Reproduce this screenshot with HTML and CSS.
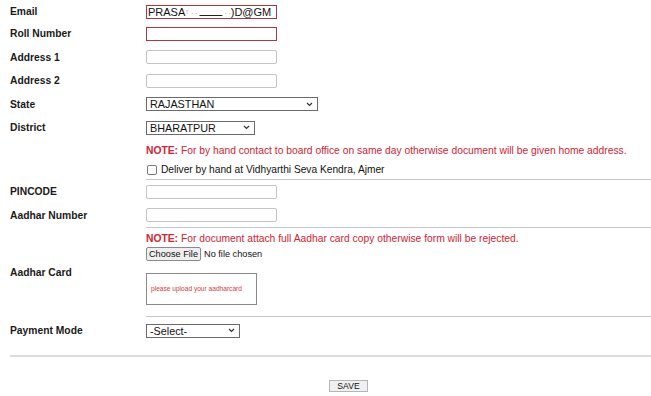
FILE: index.html
```html
<!DOCTYPE html>
<html>
<head>
<meta charset="utf-8">
<link rel="stylesheet" href="styles.css">
</head>
<body>
<div class="form">
  <div class="row r-first">
    <div class="label">Email</div>
    <div class="field"><div class="input red"><span>PRASA</span><span class="blur">&#x2191;&nbsp;.&nbsp;.&nbsp;<u>&nbsp;&nbsp;&nbsp;&nbsp;&nbsp;&nbsp;&nbsp;&nbsp;&nbsp;&nbsp;&nbsp;</u>&nbsp;.&nbsp;.</span><span>)D@GM</span></div></div>
  </div>
  <div class="row">
    <div class="label">Roll Number</div>
    <div class="field"><div class="input red"></div></div>
  </div>
  <div class="row">
    <div class="label">Address 1</div>
    <div class="field"><div class="input"></div></div>
  </div>
  <div class="row">
    <div class="label">Address 2</div>
    <div class="field"><div class="input"></div></div>
  </div>
  <div class="row">
    <div class="label">State</div>
    <div class="field"><div class="select w-state"><span>RAJASTHAN</span><svg class="chev" width="7" height="5" viewBox="0 0 7 5"><path d="M1 1 L3.5 3.5 L6 1" fill="none" stroke="#333" stroke-width="1.2"/></svg></div></div>
  </div>
  <div class="row">
    <div class="label">District</div>
    <div class="field"><div class="select w-district"><span>BHARATPUR</span><svg class="chev" width="7" height="5" viewBox="0 0 7 5"><path d="M1 1 L3.5 3.5 L6 1" fill="none" stroke="#333" stroke-width="1.2"/></svg></div></div>
  </div>
  <div class="row block b-deliver">
    <div class="label"></div>
    <div class="field lined">
      <div class="note"><b>NOTE:</b> For by hand contact to board office on same day otherwise document will be given home address.</div>
      <div class="check"><span class="box"></span><span>Deliver by hand at Vidhyarthi Seva Kendra, Ajmer</span></div>
    </div>
  </div>
  <div class="row r24">
    <div class="label">PINCODE</div>
    <div class="field"><div class="input"></div></div>
  </div>
  <div class="row r24 lined-row">
    <div class="label">Aadhar Number</div>
    <div class="field lined"><div class="input"></div></div>
  </div>
  <div class="row block b-aadhar">
    <div class="label">Aadhar Card</div>
    <div class="field lined">
      <div class="note"><b>NOTE:</b> For document attach full Aadhar card copy otherwise form will be rejected.</div>
      <div class="file"><span class="filebtn">Choose File</span><span class="nofile">No file chosen</span></div>
      <div class="preview">please upload your aadharcard</div>
    </div>
  </div>
  <div class="row r-pay">
    <div class="label">Payment Mode</div>
    <div class="field"><div class="select w-pay"><span>-Select-</span><svg class="chev" width="7" height="5" viewBox="0 0 7 5"><path d="M1 1 L3.5 3.5 L6 1" fill="none" stroke="#333" stroke-width="1.2"/></svg></div></div>
  </div>
  <div class="divider"></div>
  <div class="actions"><span class="save">SAVE</span></div>
</div>
</body>
</html>
```
FILE: styles.css
```css
html, body {
  margin: 0;
  padding: 0;
  background: #fff;
}
body {
  font-family: "Liberation Sans", Arial, sans-serif;
  color: #000;
  width: 651px;
  height: 396px;
  overflow: hidden;
}
.form {
  padding-left: 10px;
  padding-top: 1px;
}
.row {
  display: flex;
  align-items: center;
  height: 23.5px;
}
.row.r-first {
  height: 21px;
}
.row.r24 {
  height: 24px;
}
.row.lined-row {
  height: 24px;
  align-items: stretch;
}
.row.lined-row .label {
  display: flex;
  align-items: center;
}
.row.lined-row .field {
  display: flex;
  align-items: center;
}
.label {
  width: 136px;
  flex: none;
  font-weight: bold;
  font-size: 10.3px;
  color: #1a1a1a;
}
.field {
  flex: 1;
  min-width: 0;
}
.lined {
  border-bottom: 1px solid #c6c6c6;
  box-sizing: border-box;
}
.row.block {
  height: auto;
  align-items: stretch;
}
.row.block .label {
  display: flex;
  align-items: center;
}
.input {
  width: 131px;
  height: 14px;
  box-sizing: border-box;
  border: 1px solid #c4c4c4;
  border-radius: 2px;
  font-size: 11px;
  line-height: 12px;
  padding-left: 1px;
  white-space: nowrap;
  overflow: hidden;
  color: #111;
  display: flex;
}
.input.red {
  border-color: #a8393d;
  border-radius: 0;
}
.blur {
  color: #9a9a9a;
  font-size: 7.5px;
}
.blur u {
  text-decoration-color: #222;
}
.select {
  height: 14px;
  box-sizing: border-box;
  border: 1px solid #6a6a6a;
  display: flex;
  align-items: center;
  justify-content: space-between;
  padding: 0 4px 0 3px;
  font-size: 10.8px;
  color: #111;
  background: #fff;
}
.w-state { width: 172px; }
.w-district { width: 109px; }
.w-pay { width: 94px; }
.chev {
  display: block;
}
.b-deliver .field {
  padding-top: 4px;
  padding-bottom: 2px;
}
.note {
  font-size: 10.3px;
  line-height: 14px;
  color: #cf2433;
  white-space: nowrap;
}
.note b {
  font-weight: bold;
}
.check {
  margin-top: 5px;
  display: flex;
  align-items: center;
  font-size: 10.2px;
  line-height: 14px;
  color: #111;
  white-space: nowrap;
}
.box {
  width: 8px;
  height: 8px;
  border: 1px solid #777;
  border-radius: 2px;
  margin: 0 4px 0 1px;
  flex: none;
}
.b-aadhar .field {
  padding-top: 4px;
  padding-bottom: 11px;
}
.file {
  margin-top: 1px;
  display: flex;
  align-items: center;
  height: 14px;
}
.filebtn {
  height: 14px;
  box-sizing: border-box;
  width: 55px;
  border: 1px solid #8a8a8a;
  border-radius: 2px;
  background: #efefef;
  font-size: 9.2px;
  line-height: 12px;
  text-align: center;
  color: #111;
}
.nofile {
  font-size: 9.2px;
  margin-left: 3px;
  color: #111;
}
.preview {
  margin-top: 12px;
  width: 111px;
  height: 32px;
  box-sizing: border-box;
  border: 1px solid #8a8a8a;
  font-size: 6.6px;
  color: #d23a45;
  display: flex;
  align-items: center;
  padding-left: 4px;
  white-space: nowrap;
}
.row.r-pay {
  height: 28px;
}
.divider {
  margin-top: 10px;
  height: 2px;
  background: #dcdcdc;
}
.actions {
  margin-top: 23px;
  display: flex;
  justify-content: center;
  padding-left: 36px;
}
.save {
  width: 39px;
  height: 12px;
  box-sizing: border-box;
  border: 1px solid #b5b5b5;
  background: #f0f0f0;
  font-size: 8.6px;
  line-height: 10px;
  text-align: center;
  color: #111;
}
```
